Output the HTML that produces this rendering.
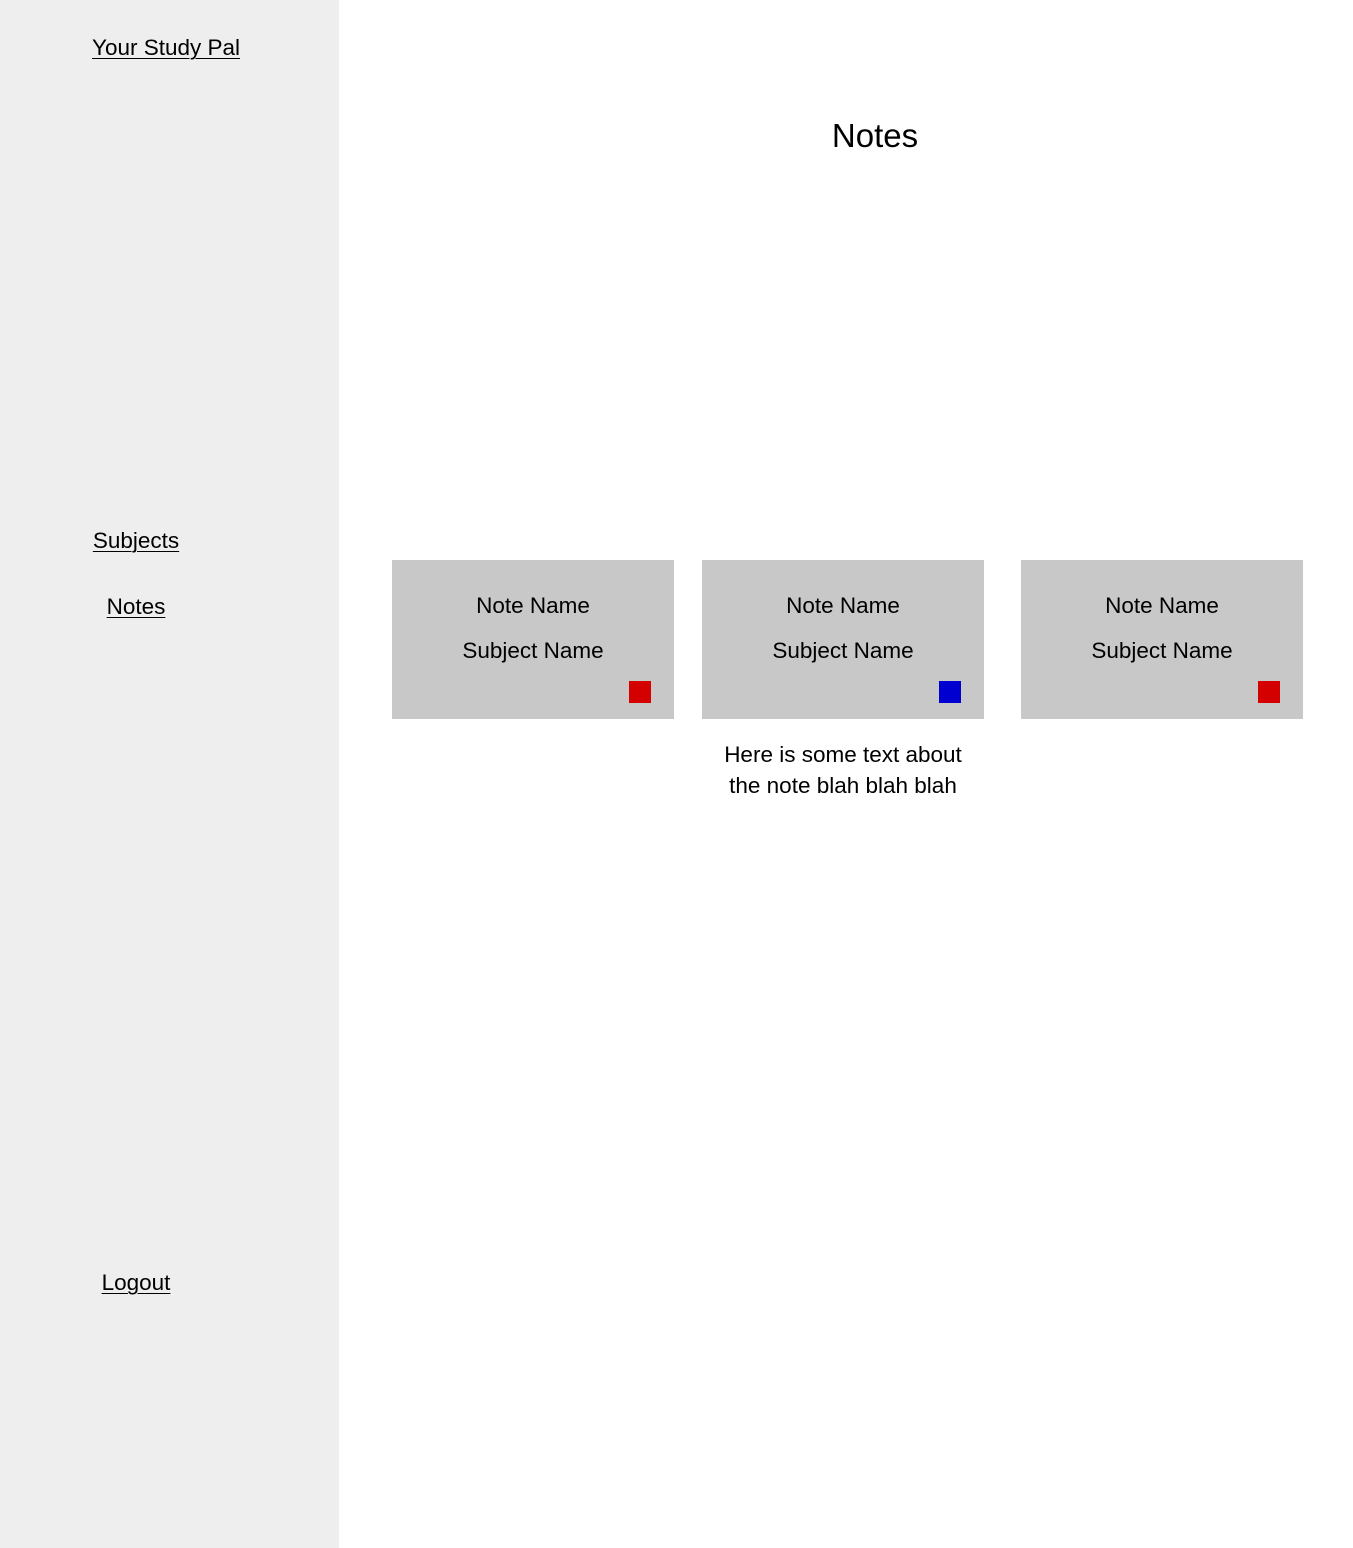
<!DOCTYPE html>
<html><head><meta charset="utf-8"><style>
html,body{margin:0;padding:0;}
body{width:1353px;height:1548px;position:relative;background:#fff;font-family:"Liberation Sans",Arial,sans-serif;color:#000;overflow:hidden;}
.side{position:absolute;left:0;top:0;width:339px;height:1548px;background:#eeeeee;}
.t{position:absolute;font-size:22.5px;line-height:26px;white-space:nowrap;}
.u{text-decoration:underline;text-decoration-thickness:1px;text-underline-offset:3px;}
.c{transform:translateX(-50%);}
.card{position:absolute;top:560px;width:282px;height:159px;background:#c8c8c8;}
.card .t{left:141px;transform:translateX(-50%);}
.sq{position:absolute;left:237px;top:121px;width:22px;height:22px;background:#d40000;}
</style></head><body>
<div class="side"></div>
<div class="t u" style="left:92px;top:35px;">Your Study Pal</div>
<div class="t u c" style="left:136px;top:528px;">Subjects</div>
<div class="t u c" style="left:136px;top:594px;">Notes</div>
<div class="t u c" style="left:136px;top:1270px;">Logout</div>
<div class="t c" style="left:875px;top:116px;font-size:33px;line-height:40px;">Notes</div>

<div class="card" style="left:392px;"><div class="t" style="top:33px;">Note Name</div><div class="t" style="top:78px;">Subject Name</div><div class="sq"></div></div>
<div class="card" style="left:702px;"><div class="t" style="top:33px;">Note Name</div><div class="t" style="top:78px;">Subject Name</div><div class="sq" style="background:#0000d0;"></div></div>
<div class="card" style="left:1021px;"><div class="t" style="top:33px;">Note Name</div><div class="t" style="top:78px;">Subject Name</div><div class="sq"></div></div>

<div class="t c" style="left:843px;top:739px;line-height:31px;text-align:center;">Here is some text about<br>the note blah blah blah</div>
</body></html>
